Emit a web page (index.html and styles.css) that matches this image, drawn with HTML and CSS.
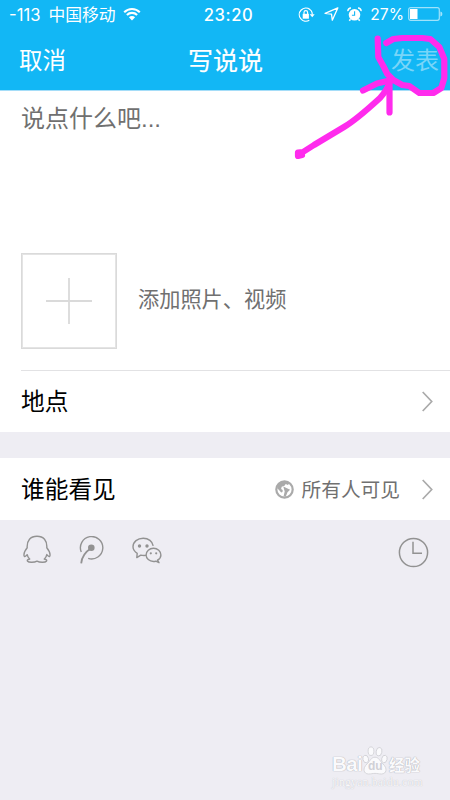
FILE: index.html
```html
<!DOCTYPE html>
<html lang="zh-CN">
<head>
<meta charset="utf-8">
<meta name="viewport" content="width=device-width, initial-scale=1">
<title>写说说</title>
<link rel="stylesheet" href="styles.css">
</head>
<body>
<div class="phone">
  <header class="header">
    <div class="status">
      <div class="status-left">
        <span class="signal">-113</span><span class="carrier">中国移动</span>
        <svg class="wifi" width="18" height="14" viewBox="0 0 18 14" fill="none" stroke="#fff" stroke-width="2.1"><path d="M1.2 5.2a11 11 0 0 1 15.6 0M3.9 8a7.2 7.2 0 0 1 10.2 0"/><path d="M9 13.4 5.9 10.2a4.4 4.4 0 0 1 6.2 0z" fill="#fff" stroke="none"/></svg>
      </div>
      <span class="time">23:20</span>
      <div class="status-right">
        <svg width="18" height="16" viewBox="0 0 18 16" fill="none" stroke="#fff" stroke-width="1.2"><path d="M11.9 2.4A6.6 6.6 0 1 0 11.3 13.3M10.8 1.8A6.6 6.6 0 0 1 14.3 7.5"/><path d="M11.7 7.2h5l-2.5 3z" fill="#fff" stroke="none"/><rect x="4.7" y="6.8" width="6.2" height="4.9" fill="#fff" stroke="none"/><path d="M6 7V5.5a1.8 1.8 0 0 1 3.6 0V7"/></svg>
        <svg class="arrow" width="15" height="15" viewBox="0 0 15 15" fill="none" stroke="#fff" stroke-width="1.3" stroke-linejoin="round"><path d="M13.8.9 1.1 6.4l6.4.8.8 6z"/></svg>
        <svg class="alarm" width="15" height="15" viewBox="0 0 15 15" fill="none"><circle cx="7.5" cy="7.8" r="5.8" fill="#fff"/><path d="M.9 4.1A3 3 0 0 1 4 1M14.1 4.1A3 3 0 0 0 11 1M3.5 12.3l-1.2 1.5M11.5 12.3l1.2 1.5" stroke="#fff" stroke-width="1.5"/><path d="M7.6 4.3v3.9H4.9" stroke="#12b7f5" stroke-width="1.1"/></svg>
        <span class="percent">27%</span>
        <svg class="battery" width="35" height="15" viewBox="0 0 35 15"><rect x=".7" y=".7" width="30.6" height="12.6" rx="2" fill="none" stroke="#a0e2fb" stroke-width="1.2"/><rect x="2" y="2" width="7.5" height="10" fill="#fff"/><path d="M32.4 4.5q2 .4 2 2.5t-2 2.5z" fill="#a0e2fb"/></svg>
      </div>
    </div>
    <nav class="nav">
      <span class="cancel">取消</span>
      <h1 class="title">写说说</h1>
      <span class="publish">发表</span>
    </nav>
  </header>

  <main>
    <section class="composer">
      <p class="placeholder">说点什么吧...</p>
      <div class="media">
        <div class="add"><svg width="46" height="46" viewBox="0 0 46 46" stroke="#dadada" stroke-width="1.8"><path d="M23 0v46M0 23h46"/></svg></div>
        <span class="media-label">添加照片、视频</span>
      </div>
    </section>
    <section class="row place">
      <span class="row-label">地点</span>
      <svg class="chevron" width="12" height="21" viewBox="0 0 12 21" fill="none" stroke="#aaa" stroke-width="1.7"><path d="m1.7 1 9 9.5-9 9.5"/></svg>
    </section>
    <section class="row visible">
      <span class="row-label">谁能看见</span>
      <svg class="globe" width="19" height="19" viewBox="0 0 19 19"><circle cx="9.5" cy="9.5" r="8.2" fill="#fff" stroke="#aaa" stroke-width="2.2"/><path d="M2 8 4 3l5-2 5.6 2.2-1.7 1.9-2.2-1-1.2 1.6-2.8 1-.6 2.2 1.6 1-.2 2.2-1.3.4L4 10zM8.3 6.4l6.8 3.4-2.6 2.4-1.8 4.5-2.1-.4 1.1-4.7z" fill="#aaa"/></svg>
      <span class="audience">所有人可见</span>
      <svg class="chevron" width="12" height="21" viewBox="0 0 12 21" fill="none" stroke="#aaa" stroke-width="1.7"><path d="m1.7 1 9 9.5-9 9.5"/></svg>
    </section>
    <section class="share">
      <svg class="qq" width="28" height="29" viewBox="0 0 28 29" fill="none" stroke="#929292" stroke-width="1.4" stroke-linejoin="round"><path d="M4.2 12.8C3.7 5.5 7.5 1.2 14 1.2s10.3 4.3 9.8 11.6c1.9 2.3 3.5 5.3 3.2 7.7-.2 1.6-1.8 1.1-3.2-.9-.3 1.7-1.2 3.2-2.5 4.4 2.3.6 2.8 1.4 2.1 2.3-1.3 1.5-6.8 1.2-9.4-.2-2.6 1.4-8.1 1.7-9.4.2-.7-.9-.2-1.7 2.1-2.3-1.3-1.2-2.2-2.7-2.5-4.4-1.4 2-3 2.5-3.2.9-.3-2.4 1.3-5.4 3.2-7.7z"/></svg>
      <svg class="qzone" width="25" height="28" viewBox="0 0 25 28" fill="none" stroke="#929292" stroke-width="1.4"><path d="M2.3 16.1A11.2 11.2 0 1 1 9.2 22.4"/><path d="M2.2 27.3C2.7 21.5 6 16.2 12 12.3" stroke-width="1.8"/><circle cx="12.3" cy="11.8" r="3.3" fill="#929292" stroke="none"/></svg>
      <svg class="wechat" width="30" height="27" viewBox="0 0 30 27" fill="none" stroke="#929292" stroke-width="1.4" stroke-linejoin="round"><path d="M14 18.4q-2.8.4-5.2-.3l-4 2.5.4-4.2C2.4 14.5 1 12.3 1 9.8 1 4.9 5.6 1.2 11.2 1.2c5.3 0 9.3 3.3 10 7.7"/><path d="M25.5 23.2c2-1.2 3.4-3 3.4-5.3 0-3.7-3.3-6.6-7.4-6.6s-7.4 2.9-7.4 6.6 3.3 6.6 7.4 6.6q1.2 0 2.3-.3l3.2 1.5z"/><g fill="#929292" stroke="none"><circle cx="7.5" cy="9" r="1.7"/><circle cx="15" cy="9" r="1.7"/><circle cx="18.8" cy="16.3" r="1.1"/><circle cx="24.2" cy="16.3" r="1.1"/></g></svg>
      <svg class="clock" width="31" height="31" viewBox="0 0 31 31" fill="none" stroke="#929292" stroke-width="1.5"><circle cx="15.5" cy="15.5" r="14.1"/><path d="M15 4.8v11.5h9"/></svg>
    </section>
  </main>

  <svg class="marker" width="170" height="140" viewBox="0 0 170 140" fill="none" stroke="#ff2bed" stroke-width="6.2" stroke-linecap="round" stroke-linejoin="round"><path d="M97.7 8.5 98.3 27l5 9 4 8 6 6 9 5 7 1 10 7h14l8-5 3-10V29l-5-12-9-8-8-1h-20l-9 1-7 4"/><path d="m83 60.5 14-7 12.5-3v32"/><path d="M110 51q-2 8-10 17Q76 90 64 97L34 115 23 122l-5 .5v3.5l4-1" /></svg>

  <div class="watermark">
    <div class="wm-top">
      <span class="wm-bai">Bai</span>
      <span class="wm-paw"><svg width="26" height="29" viewBox="0 0 26 29" fill="#fafafc" stroke="#d2d2d7" stroke-width=".9"><ellipse cx="3.7" cy="13" rx="2.8" ry="3.8" transform="rotate(-15 3.7 13)"/><ellipse cx="9" cy="5.2" rx="2.9" ry="4.3"/><ellipse cx="17" cy="5.7" rx="2.9" ry="4.3" transform="rotate(12 17 5.7)"/><ellipse cx="22.4" cy="13" rx="2.7" ry="3.8" transform="rotate(15 22.4 13)"/><path d="M13 11.2c4 0 5.1 4.2 7.8 6.6 5.3 4.7 3.5 10.2-1.3 10.2-2.7 0-4-.6-6.5-.6s-3.8.6-6.5.6c-4.8 0-6.6-5.5-1.3-10.2C7.9 15.4 9 11.2 13 11.2z"/></svg><span class="wm-du">du</span></span>
      <span class="wm-jy">经验</span>
    </div>
    <div class="wm-url">jingyan.baidu.com</div>
  </div>
</div>
</body>
</html>
```
FILE: styles.css
```css
* { box-sizing: border-box; }
body {
  margin: 0;
  background: #eeedf3;
  font-family: "Liberation Sans", "Noto Sans CJK SC", sans-serif;
}
h1, p { margin: 0; font-weight: 400; }
svg { display: block; flex: none; }
.phone {
  position: relative;
  width: 450px;
  height: 800px;
  overflow: hidden;
  white-space: nowrap;
}
.header {
  height: 91px;
  background: #12b7f5;
  border-bottom: 1px solid #a5ddf8;
  color: #fff;
}
.status {
  display: grid;
  grid-template-columns: 1fr auto 1fr;
  height: 30px;
  align-items: center;
  font: 16.6px/30px Inter, "Noto Sans CJK SC", sans-serif;
}
.status-left { display: flex; align-items: center; padding-left: 9px; }
.carrier { font-size: 16.8px; margin-left: 8px; }
.wifi { margin-left: 7px; margin-bottom: 2px; }
.time { font-size: 16.6px; font-weight: 500; letter-spacing: .6px; padding-left: 7px; }
.status-right { display: flex; align-items: center; justify-content: flex-end; padding-right: 7px; }
.status-right svg { margin-bottom: 1px; }
.arrow { margin-left: 8px; }
.alarm { margin-left: 8px; }
.percent { margin-left: 8px; font-size: 15.6px; }
.battery { margin-left: 4px; }
.nav {
  display: grid;
  grid-template-columns: 1fr auto 1fr;
  height: 60px;
  align-items: center;
  padding: 0 11px 0 19px;
  font-size: 23.5px;
  line-height: 62px;
}
.title {
  padding-right: 7px;
  font-size: 25px;
  -webkit-text-stroke: .2px #fff;
}
.publish { text-align: right; color: #79d5f8; font-size: 24px; }
.composer { height: 279px; background: #fff; }
.placeholder {
  height: 162px;
  padding: 10px 0 0 21px;
  font-size: 24px;
  line-height: 36px;
  color: #707070;
}
.media { display: flex; align-items: center; padding-left: 21px; }
.add {
  display: grid;
  place-items: center;
  width: 96px;
  height: 96px;
  border: 1.5px solid #dadada;
  outline: .5px solid #e4e4e4;
  outline-offset: -2px;
}
.media-label { margin-left: 21px; padding-bottom: 3px; font-size: 21.2px; line-height: 30px; color: #707070; }
.row {
  position: relative;
  display: flex;
  align-items: center;
  height: 62px;
  padding: 0 17px 0 21px;
  background: #fff;
}
.place::before {
  content: "";
  position: absolute;
  left: 21px;
  right: 0;
  top: 0;
  height: 1px;
  background: #e2e2e4;
}
.visible { margin-top: 26px; }
.row-label { margin-right: auto; padding-bottom: 2px; font-size: 23.7px; color: #000; }
.audience { margin: 0 21px 0 8px; padding-bottom: 2px; font-size: 19.7px; color: #707070; }
.share { display: flex; align-items: flex-start; padding: 15px 21px 0 23px; }
.qzone { margin-left: 28px; margin-top: 1px; }
.wechat { margin-left: 28px; margin-top: 2px; }
.clock { margin-left: auto; margin-top: 2px; }
.marker { position: absolute; left: 280px; top: 30px; }
.watermark {
  position: absolute;
  left: 332px;
  top: 746px;
  width: 90px;
  color: #fafafc;
  text-shadow: 0 0 1px #aaaab0, 0 0 1px #bbbbc2;
}
.wm-top { display: flex; align-items: flex-end; height: 29px; }
.wm-bai { font: bold 20.5px/21px "Liberation Sans", sans-serif; letter-spacing: -.6px; height: 22px; width: 30px; }
.wm-paw { position: relative; }
.wm-du {
  position: absolute;
  left: 6px;
  bottom: 3px;
  font: bold 12px/12px "Liberation Sans", sans-serif;
  color: #d0d0d6;
  text-shadow: none;
}
.wm-jy { font: bold 15.5px/20px "Noto Sans CJK SC", sans-serif; margin-left: 1px; height: 21px; }
.wm-url {
  margin-top: 1px;
  font: 11.5px/13px "Liberation Serif", serif;
  letter-spacing: .3px;
  color: #f8f8fa;
  text-shadow: 0 0 1px #b4b4bb;
}
```
